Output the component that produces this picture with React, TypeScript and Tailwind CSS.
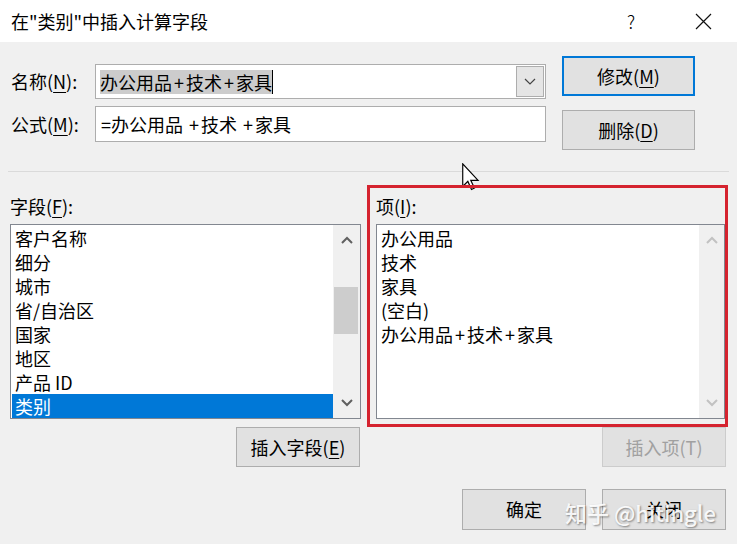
import React from "react";

const fieldItems = ["客户名称", "细分", "城市", "省/自治区", "国家", "地区", "产品 ID", "类别"];
const itemList = ["办公用品", "技术", "家具", "(空白)", "办公用品+技术+家具"];

// the dialog font draws "+" wider than Noto does, so pad it a little
const Plus = ({ text }: { text: string }) => (
    <>
        {text.split("+").map((part, i) => (
            <React.Fragment key={i}>
                {i > 0 && <span className="px-[2px]">+</span>}
                {part}
            </React.Fragment>
        ))}
    </>
);

const Chevron = ({ up, disabled }: { up?: boolean; disabled?: boolean }) => (
    <svg width="12" height="8" viewBox="0 0 12 8" fill="none">
        <polyline
            points={up ? "1,7 6,2 11,7" : "1,1 6,6 11,1"}
            stroke={disabled ? "#c2c2c2" : "#606060"}
            strokeWidth="2"
        />
    </svg>
);

const ScrollBar = ({ disabled, width }: { disabled?: boolean; width: string }) => (
    <div className={`flex flex-col bg-[#f0f0f0] ${width}`}>
        <div className="flex h-[30px] items-center justify-center">
            <Chevron up disabled={disabled} />
        </div>
        <div className="flex-1">
            {!disabled && <div className="ml-px mr-[2px] mt-[32px] h-[47px] bg-[#cdcdcd]" />}
        </div>
        <div className="flex h-[30px] items-center justify-center">
            <Chevron disabled={disabled} />
        </div>
    </div>
);

const ListBox = ({ items, selected, disabled, scrollWidth }: { items: string[]; selected?: number; disabled?: boolean; scrollWidth: string }) => (
    <div className="flex h-[195px] border border-[#828790] bg-white">
        <div className="flex-1 pl-px pt-px">
            {items.map((item, i) => (
                <div
                    key={item}
                    className={`h-[24px] whitespace-pre pl-[3px] text-[18px] leading-[24px] ${i === selected ? "bg-[#0078d7] text-white" : "text-black"}`}
                >
                    <Plus text={item} />
                </div>
            ))}
        </div>
        <ScrollBar disabled={disabled} width={scrollWidth} />
    </div>
);

const DialogButton = ({ children, isDefault, disabled, className = "" }: { children: React.ReactNode; isDefault?: boolean; disabled?: boolean; className?: string }) => (
    <button
        type="button"
        className={`flex w-[124px] items-center justify-center bg-[#e1e1e1] text-[18px] ${isDefault ? "border-2 border-[#0078d7]" : disabled ? "border border-[#cccccc]" : "border border-[#adadad]"} ${disabled ? "text-[#a0a0a0]" : "text-black"} ${className}`}
    >
        {children}
    </button>
);

const Key = ({ k }: { k: string }) => <u className="underline-offset-[3px]">{k}</u>;

export default function App() {
    return (
        <div className="relative h-[544px] w-[737px] overflow-hidden bg-[#f0f0f0] font-['Noto_Sans_CJK_SC',sans-serif] text-black">
            {/* title bar */}
            <div className="flex h-[42px] items-center bg-white pl-[11px]">
                <span className="text-[18px]">在"类别"中插入计算字段</span>
                <span className="ml-auto mr-[60px] text-[18px] font-light">?</span>
                <svg className="mr-[25px]" width="17" height="17" viewBox="0 0 17 17">
                    <path d="M1 1 L16 16 M16 1 L1 16" stroke="#111" strokeWidth="1.2" />
                </svg>
            </div>

            {/* name / formula */}
            <div className="flex pt-[14px]">
                <div className="flex w-[546px] flex-col gap-[7px] pt-[8px]">
                    <div className="flex h-[35px] items-center">
                        <label className="w-[95px] pl-[11px] text-[18px]">名称(<Key k="N" />):</label>
                        <div className="flex h-full flex-1 items-center border border-[#adadad] bg-white pl-[4px]">
                            <span className="bg-[#cccccc] text-[18px] leading-[24px]"><Plus text="办公用品+技术+家具" /></span>
                            <span className="h-[24px] w-px bg-black" />
                            <div className="ml-auto mr-px flex h-[31px] w-[28px] items-center justify-center border border-[#adadad] bg-[#e5e5e5]">
                                <svg width="12" height="7" viewBox="0 0 12 7" fill="none">
                                    <polyline points="1,1 6,6 11,1" stroke="#444" strokeWidth="1.2" />
                                </svg>
                            </div>
                        </div>
                    </div>
                    <div className="flex h-[36px] items-center">
                        <label className="w-[95px] pl-[11px] text-[18px]">公式(<Key k="M" />):</label>
                        <div className="flex h-full flex-1 items-center border border-[#adadad] bg-white pl-[5px]">
                            <span className="whitespace-pre text-[18px]"><Plus text="=办公用品 +技术 +家具" /></span>
                        </div>
                    </div>
                </div>
                <div className="ml-[16px] flex flex-col gap-[14px]">
                    <DialogButton isDefault className="h-[40px] w-[133px]">修改(<Key k="M" />)</DialogButton>
                    <DialogButton className="h-[40px] w-[133px]">删除(<Key k="D" />)</DialogButton>
                </div>
            </div>

            <div className="mx-[8px] mt-[21px] h-px bg-[#dadada]" />

            {/* fields and items */}
            <div className="mt-[13px] flex">
                <div className="ml-[10px] w-[351px] pt-[9px]">
                    <div className="h-[24px] text-[18px] leading-[24px]">字段(<Key k="F" />):</div>
                    <div className="mt-[6px]">
                        <ListBox items={fieldItems} selected={7} scrollWidth="w-[27px]" />
                    </div>
                </div>
                <div className="relative z-10 ml-[6px] h-[242px] w-[361px] border-[3px] border-[#d5232f] pl-[6px] pt-[6px]">
                    <div className="h-[24px] text-[18px] leading-[24px]">项(<Key k="I" />):</div>
                    <div className="mt-[6px]">
                        <ListBox items={itemList} disabled scrollWidth="w-[25px]" />
                    </div>
                </div>
            </div>

            <div className="flex pr-[11px]">
                <DialogButton className="ml-[236px] h-[40px]">插入字段(<Key k="E" />)</DialogButton>
                <DialogButton disabled className="ml-auto h-[40px]">插入项(T)</DialogButton>
            </div>

            <div className="mt-[22px] flex justify-end gap-[16px] pr-[11px]">
                <DialogButton className="h-[41px]">确定</DialogButton>
                <DialogButton className="h-[41px]">关闭</DialogButton>
            </div>

            {/* mouse pointer */}
            <svg className="absolute left-[462px] top-[163px]" width="19" height="28" viewBox="0 0 13 19">
                <path d="M0.5 0.5 L0.5 16 L4 12.5 L6.5 18 L8.5 17 L6 11.8 L11 11.8 Z" fill="#fff" stroke="#000" strokeWidth="0.8" />
            </svg>

            {/* watermark */}
            <div className="absolute left-[565px] top-[496px] text-[22px] font-medium text-white/90 [text-shadow:1px_1px_2px_rgba(0,0,0,0.45)]">
                知乎 @hitingle
            </div>
        </div>
    );
}
